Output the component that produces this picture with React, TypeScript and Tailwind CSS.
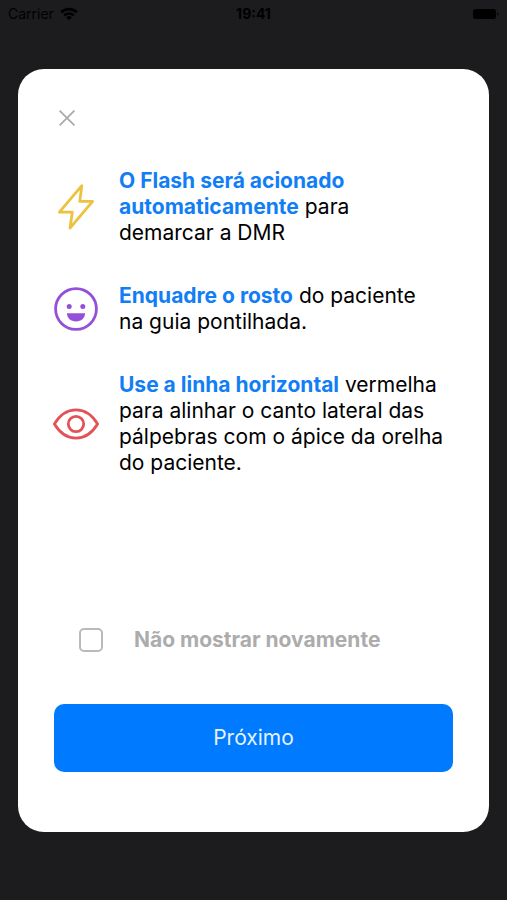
import type { ReactNode } from "react"
import { useState } from "react"

function WifiIcon() {
  return (
    <svg viewBox="0 0 18 14" className="w-[18px] h-[14px]" fill="none" stroke="currentColor" aria-hidden="true">
      <path d="M1.2 5.2a11.2 11.2 0 0 1 15.6 0" strokeWidth="2.8" />
      <path d="M4.2 8.4a6.9 6.9 0 0 1 9.6 0" strokeWidth="2.4" />
      <path d="M9 13.2 6.2 10.4a4 4 0 0 1 5.6 0Z" fill="currentColor" stroke="none" />
    </svg>
  )
}

function FlashIcon() {
  return (
    <svg viewBox="1 1 44 44" className="size-11 overflow-visible" fill="none" stroke="#ecc23f" strokeWidth="2.8" aria-hidden="true">
      <path d="M28.8 1.6 6.4 28.2H19.3L17 44.2 39.6 17.4H26.8Z" strokeLinejoin="round" />
    </svg>
  )
}

function SmileIcon() {
  return (
    <svg viewBox="1 1 44 44" className="size-11 overflow-visible" fill="none" aria-hidden="true">
      <circle cx="23" cy="23" r="20.4" stroke="#9450d8" strokeWidth="2.8" />
      <circle cx="16.2" cy="20.6" r="2.5" fill="#9450d8" />
      <circle cx="29.8" cy="20.6" r="2.5" fill="#9450d8" />
      <path d="M14 27.2H32C32 32.2 28.2 35.4 23 35.4S14 32.2 14 27.2Z" fill="#9450d8" />
    </svg>
  )
}

function EyeIcon() {
  return (
    <svg viewBox="1 1 44 44" className="size-11 overflow-visible" fill="none" stroke="#e35256" strokeWidth="2.8" aria-hidden="true">
      <path d="M1.4 23C6.6 14.4 14 8.9 23 8.9S39.4 14.4 44.6 23C39.4 31.6 32 37.1 23 37.1S6.6 31.6 1.4 23Z" strokeLinejoin="round" />
      <circle cx="23" cy="23" r="7.7" />
    </svg>
  )
}

function Tip({ icon, title, children }: { icon: ReactNode; title: string; children: ReactNode }) {
  return (
    <li className="flex items-center gap-[21px]">
      <span className="shrink-0">{icon}</span>
      <p className="flex-1">
        <strong className="font-bold text-[#117ef5]">{title}</strong> {children}
      </p>
    </li>
  )
}

export default function App() {
  const [hideNextTime, setHideNextTime] = useState(false)

  return (
    <div className="flex min-h-screen flex-col bg-[#1c1c1e] font-['Inter','Liberation_Sans',sans-serif]">
      <header className="grid h-7 grid-cols-3 items-center px-2 text-sm text-black">
        <div className="flex items-center gap-1.5">
          <span>Carrier</span>
          <WifiIcon />
        </div>
        <time className="text-center font-bold">19:41</time>
        <svg viewBox="0 0 27 12" className="h-3 w-[27px] justify-self-end" aria-hidden="true">
          <rect x="1" y="1" width="23" height="10" rx="2.5" />
          <path d="M25.4 4.2v3.6a2 2 0 0 0 0-3.6Z" />
        </svg>
      </header>

      <main className="flex flex-1 flex-col px-[18px] pt-[41px] pb-[68px]">
        <section className="flex flex-1 flex-col rounded-[26px] bg-white px-9 pt-9 pb-[60px]">
          <button type="button" aria-label="Fechar" className="flex size-[26px] items-center justify-center text-[#a9a9a9]">
            <svg viewBox="0 0 16 16" className="size-4" stroke="currentColor" strokeWidth="1.7" aria-hidden="true">
              <path d="M.6.6 15.4 15.4M15.4.6.6 15.4" />
            </svg>
          </button>

          <ul className="mt-[37px] flex flex-col gap-[37px] pr-2 text-[21px] leading-[26px] text-black">
            <Tip icon={<FlashIcon />} title="O Flash será acionado automaticamente">
              para demarcar a DMR
            </Tip>
            <Tip icon={<SmileIcon />} title="Enquadre o rosto">
              do paciente na guia pontilhada.
            </Tip>
            <Tip icon={<EyeIcon />} title="Use a linha horizontal">
              vermelha para alinhar o canto lateral das pálpebras com o ápice da orelha do paciente.
            </Tip>
          </ul>

          <label className="mt-auto mb-[51px] flex items-center gap-[31px] pl-[25px] text-[21px] leading-[26px] font-bold text-[#acacac]">
            <input
              type="checkbox"
              checked={hideNextTime}
              onChange={(e) => setHideNextTime(e.target.checked)}
              className="size-6 shrink-0 appearance-none rounded-[5px] border-2 border-[#bababa] checked:bg-[#007aff]"
            />
            Não mostrar novamente
          </label>

          <button type="button" className="h-[68px] rounded-[10px] bg-[#007aff] text-[21px] text-[#e6f2ff]">
            Próximo
          </button>
        </section>
      </main>
    </div>
  )
}
